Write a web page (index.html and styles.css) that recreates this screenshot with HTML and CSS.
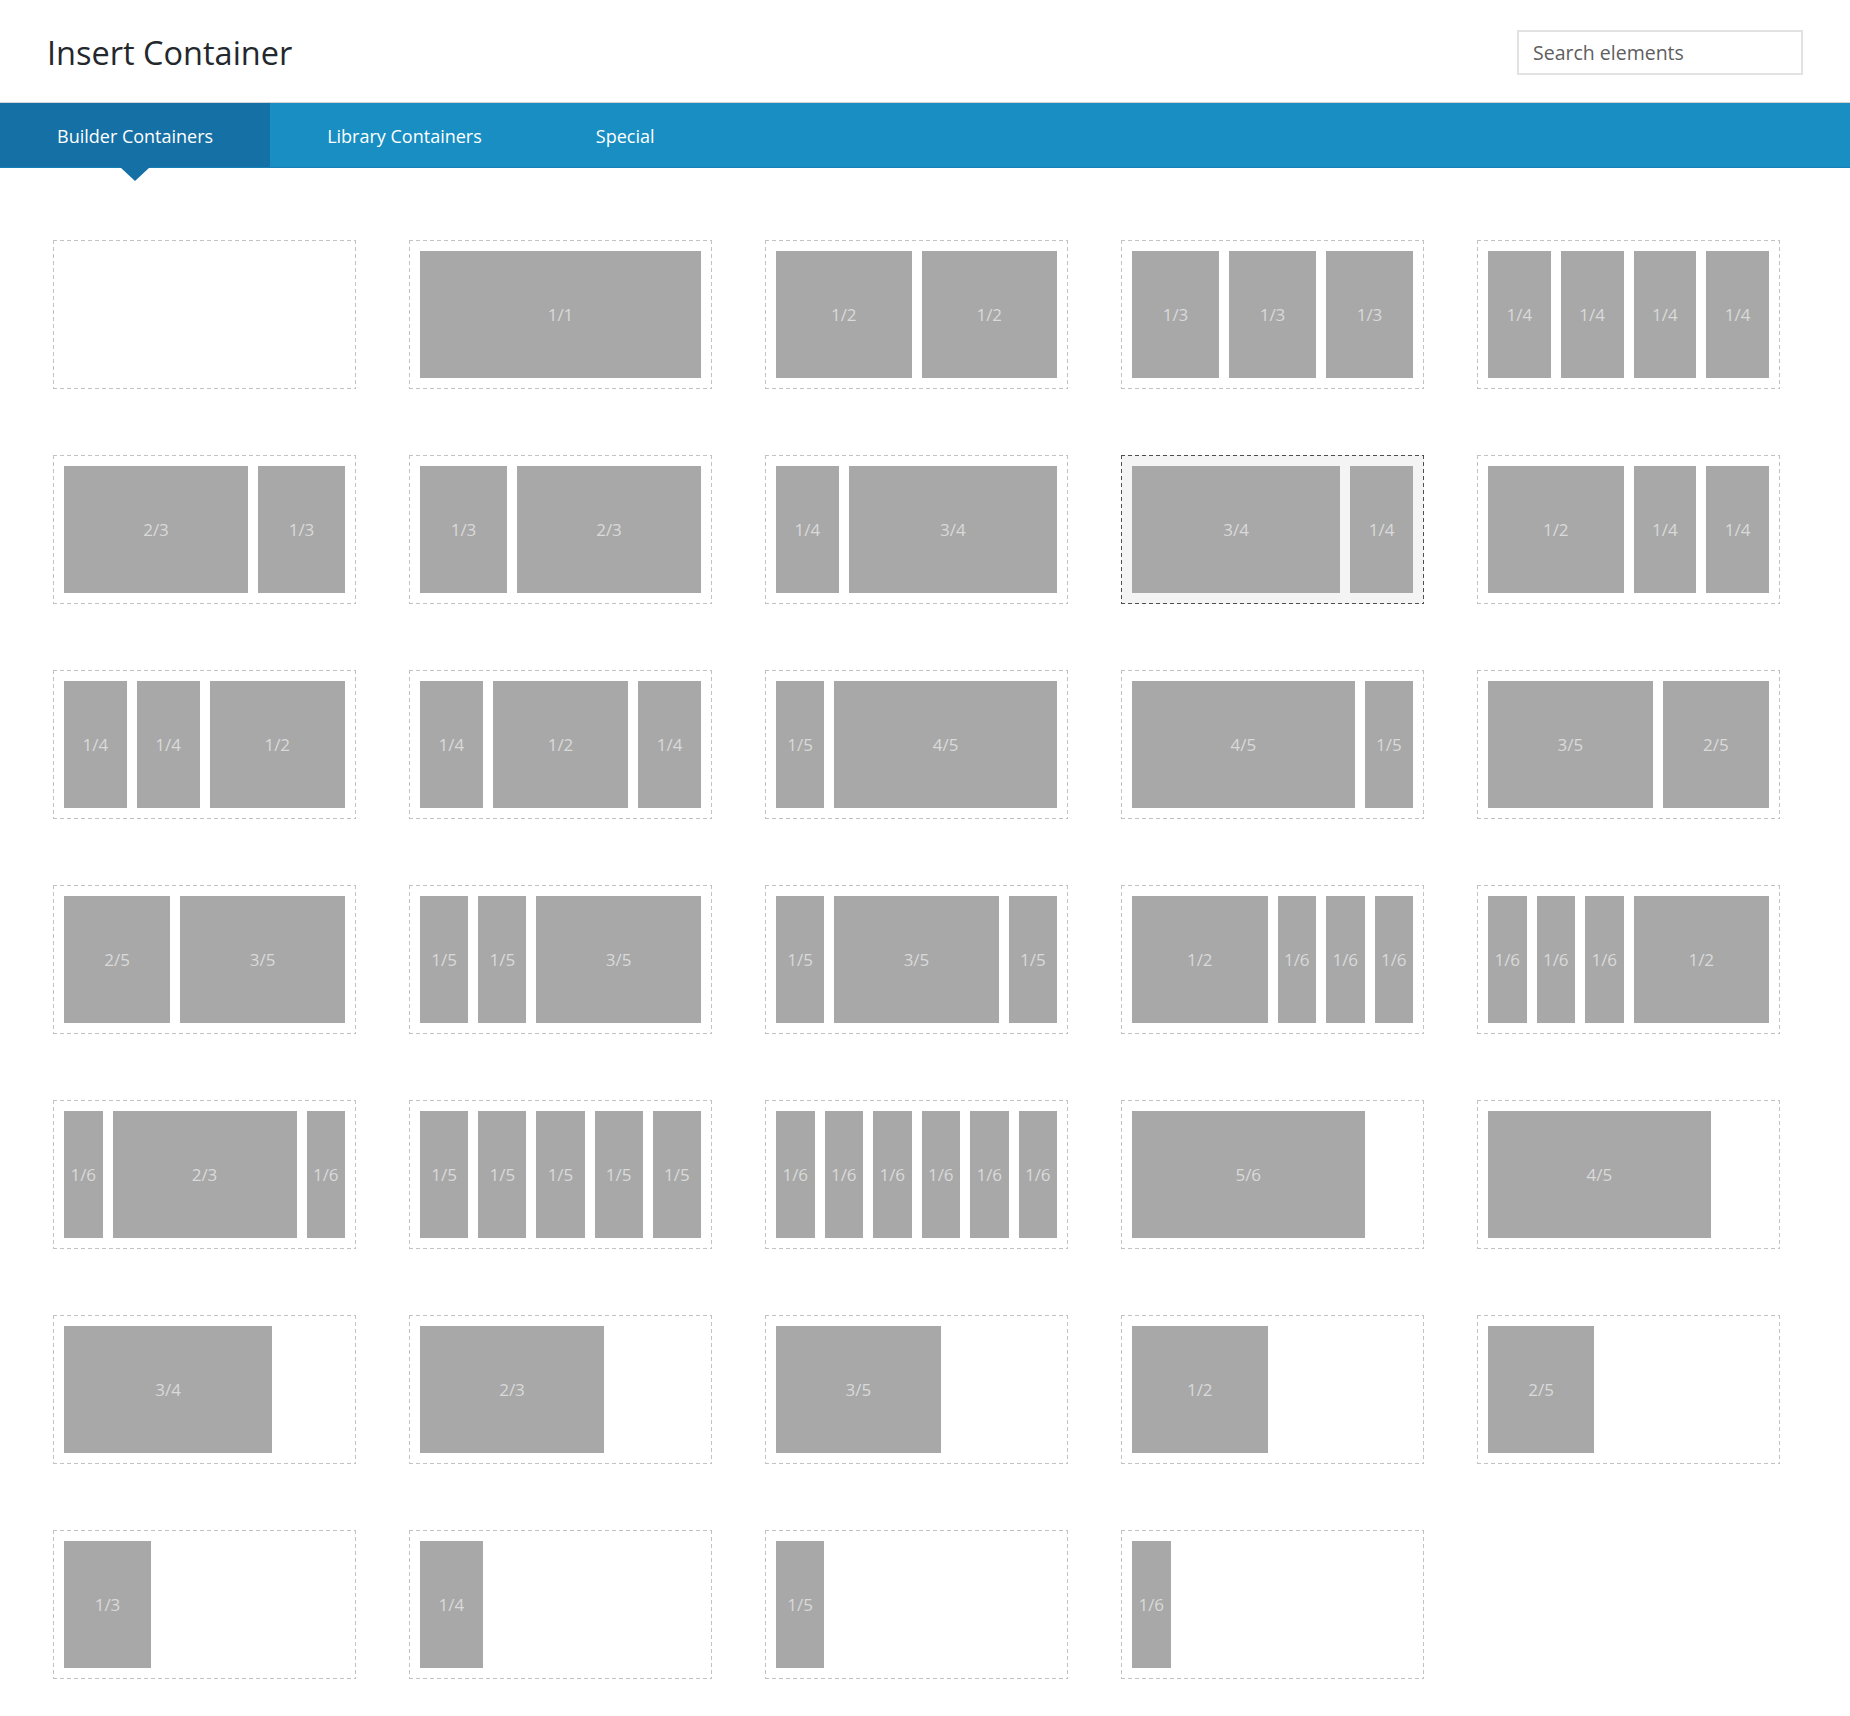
FILE: index.html
```html
<!DOCTYPE html>
<html lang="en">
<head>
    <meta charset="UTF-8">
    <meta name="viewport" content="width=device-width, initial-scale=1.0">
    <title>Insert Container</title>
    <link rel="stylesheet" href="styles.css">
</head>
<body>
    <div class="modal-header">
        <h1 class="modal-title">Insert Container</h1>
        <input class="search" type="text" placeholder="Search elements">
    </div>

    <div class="tabs">
        <a class="tab active">Builder Containers</a>
        <a class="tab">Library Containers</a>
        <a class="tab">Special</a>
    </div>

    <div class="layouts">
        <!-- row 1 -->
        <div class="layout"><div class="cols"></div></div>
        <div class="layout"><div class="cols">
            <div class="col w11">1/1</div>
        </div></div>
        <div class="layout"><div class="cols">
            <div class="col w12">1/2</div><div class="col w12">1/2</div>
        </div></div>
        <div class="layout"><div class="cols">
            <div class="col w13">1/3</div><div class="col w13">1/3</div><div class="col w13">1/3</div>
        </div></div>
        <div class="layout"><div class="cols">
            <div class="col w14">1/4</div><div class="col w14">1/4</div><div class="col w14">1/4</div><div class="col w14">1/4</div>
        </div></div>

        <!-- row 2 -->
        <div class="layout"><div class="cols">
            <div class="col w23">2/3</div><div class="col w13">1/3</div>
        </div></div>
        <div class="layout"><div class="cols">
            <div class="col w13">1/3</div><div class="col w23">2/3</div>
        </div></div>
        <div class="layout"><div class="cols">
            <div class="col w14">1/4</div><div class="col w34">3/4</div>
        </div></div>
        <div class="layout hover"><div class="cols">
            <div class="col w34">3/4</div><div class="col w14">1/4</div>
        </div></div>
        <div class="layout"><div class="cols">
            <div class="col w12">1/2</div><div class="col w14">1/4</div><div class="col w14">1/4</div>
        </div></div>

        <!-- row 3 -->
        <div class="layout"><div class="cols">
            <div class="col w14">1/4</div><div class="col w14">1/4</div><div class="col w12">1/2</div>
        </div></div>
        <div class="layout"><div class="cols">
            <div class="col w14">1/4</div><div class="col w12">1/2</div><div class="col w14">1/4</div>
        </div></div>
        <div class="layout"><div class="cols">
            <div class="col w15">1/5</div><div class="col w45">4/5</div>
        </div></div>
        <div class="layout"><div class="cols">
            <div class="col w45">4/5</div><div class="col w15">1/5</div>
        </div></div>
        <div class="layout"><div class="cols">
            <div class="col w35">3/5</div><div class="col w25">2/5</div>
        </div></div>

        <!-- row 4 -->
        <div class="layout"><div class="cols">
            <div class="col w25">2/5</div><div class="col w35">3/5</div>
        </div></div>
        <div class="layout"><div class="cols">
            <div class="col w15">1/5</div><div class="col w15">1/5</div><div class="col w35">3/5</div>
        </div></div>
        <div class="layout"><div class="cols">
            <div class="col w15">1/5</div><div class="col w35">3/5</div><div class="col w15">1/5</div>
        </div></div>
        <div class="layout"><div class="cols">
            <div class="col w12">1/2</div><div class="col w16">1/6</div><div class="col w16">1/6</div><div class="col w16">1/6</div>
        </div></div>
        <div class="layout"><div class="cols">
            <div class="col w16">1/6</div><div class="col w16">1/6</div><div class="col w16">1/6</div><div class="col w12">1/2</div>
        </div></div>

        <!-- row 5 -->
        <div class="layout"><div class="cols">
            <div class="col w16">1/6</div><div class="col w23">2/3</div><div class="col w16">1/6</div>
        </div></div>
        <div class="layout"><div class="cols">
            <div class="col w15">1/5</div><div class="col w15">1/5</div><div class="col w15">1/5</div><div class="col w15">1/5</div><div class="col w15">1/5</div>
        </div></div>
        <div class="layout"><div class="cols">
            <div class="col w16">1/6</div><div class="col w16">1/6</div><div class="col w16">1/6</div><div class="col w16">1/6</div><div class="col w16">1/6</div><div class="col w16">1/6</div>
        </div></div>
        <div class="layout"><div class="cols">
            <div class="col w56">5/6</div>
        </div></div>
        <div class="layout"><div class="cols">
            <div class="col w45">4/5</div>
        </div></div>

        <!-- row 6 -->
        <div class="layout"><div class="cols">
            <div class="col w34">3/4</div>
        </div></div>
        <div class="layout"><div class="cols">
            <div class="col w23">2/3</div>
        </div></div>
        <div class="layout"><div class="cols">
            <div class="col w35">3/5</div>
        </div></div>
        <div class="layout"><div class="cols">
            <div class="col w12">1/2</div>
        </div></div>
        <div class="layout"><div class="cols">
            <div class="col w25">2/5</div>
        </div></div>

        <!-- row 7 -->
        <div class="layout"><div class="cols">
            <div class="col w13">1/3</div>
        </div></div>
        <div class="layout"><div class="cols">
            <div class="col w14">1/4</div>
        </div></div>
        <div class="layout"><div class="cols">
            <div class="col w15">1/5</div>
        </div></div>
        <div class="layout"><div class="cols">
            <div class="col w16">1/6</div>
        </div></div>
    </div>
</body>
</html>
```

FILE: styles.css
```css
* {
    box-sizing: border-box;
}

body {
    margin: 0;
    font-family: "Open Sans", "Noto Sans", sans-serif;
    background: #fff;
}

.modal-header {
    height: 103px;
    padding: 2px 47px 0;
    display: flex;
    align-items: center;
    justify-content: space-between;
    border-bottom: 1px solid #d4d4d4;
}

.modal-title {
    margin: 0;
    font-size: 32.5px;
    font-weight: 400;
    color: #23282d;
}

.search {
    width: 286px;
    height: 45px;
    padding: 0 14px;
    border: 2px solid #e2e2e2;
    font-family: inherit;
    font-size: 19.5px;
    color: #333;
    outline: none;
}

.search::placeholder {
    color: #5e5e5e;
}

/* tab strip */
.tabs {
    display: flex;
    height: 65px;
    background: #188ec3;
    border-bottom: 1px solid #1680b6;
}

.tab {
    position: relative;
    display: flex;
    align-items: center;
    padding: 2px 57px 0;
    color: #fff;
    font-size: 18px;
    cursor: pointer;
}

.tab.active {
    background: #1570a5;
}

.tab.active::after {
    content: "";
    position: absolute;
    left: 50%;
    top: 100%;
    margin-left: -15px;
    border-left: 15px solid transparent;
    border-right: 15px solid transparent;
    border-top: 14px solid #1570a5;
}

/* layout picker grid */
.layouts {
    display: grid;
    grid-template-columns: repeat(5, 303px);
    column-gap: 53px;
    row-gap: 66px;
    padding: 72px 0 38px 53px;
}

/* dashed outline drawn with gradients so the dashes are longer than the browser's */
.layout {
    --dash: #c2c2c2;
    padding: 11px;
    cursor: pointer;
    background:
        repeating-linear-gradient(90deg, var(--dash) 0 4px, transparent 4px 7px) left top / 100% 1px no-repeat,
        repeating-linear-gradient(90deg, var(--dash) 0 4px, transparent 4px 7px) left bottom / 100% 1px no-repeat,
        repeating-linear-gradient(180deg, var(--dash) 0 4px, transparent 4px 7px) left top / 1px 100% no-repeat,
        repeating-linear-gradient(180deg, var(--dash) 0 4px, transparent 4px 7px) right top / 1px 100% no-repeat;
}

.layout.hover {
    --dash: #4f4f4f;
    background-color: #f4f4f4;
}

.cols {
    display: flex;
    gap: 10px;
    height: 127px;
}

.col {
    display: flex;
    align-items: center;
    justify-content: center;
    background: #a8a8a8;
    color: #dadada;
    font-size: 17px;
}

/* column widths: fraction of (row + gap) minus the gap */
.w11 { width: 100%; }
.w12 { width: calc((100% + 10px) / 2 - 10px); }
.w13 { width: calc((100% + 10px) / 3 - 10px); }
.w23 { width: calc((100% + 10px) * 2 / 3 - 10px); }
.w14 { width: calc((100% + 10px) / 4 - 10px); }
.w34 { width: calc((100% + 10px) * 3 / 4 - 10px); }
.w15 { width: calc((100% + 10px) / 5 - 10px); }
.w25 { width: calc((100% + 10px) * 2 / 5 - 10px); }
.w35 { width: calc((100% + 10px) * 3 / 5 - 10px); }
.w45 { width: calc((100% + 10px) * 4 / 5 - 10px); }
.w16 { width: calc((100% + 10px) / 6 - 10px); }
.w56 { width: calc((100% + 10px) * 5 / 6 - 10px); }
```
